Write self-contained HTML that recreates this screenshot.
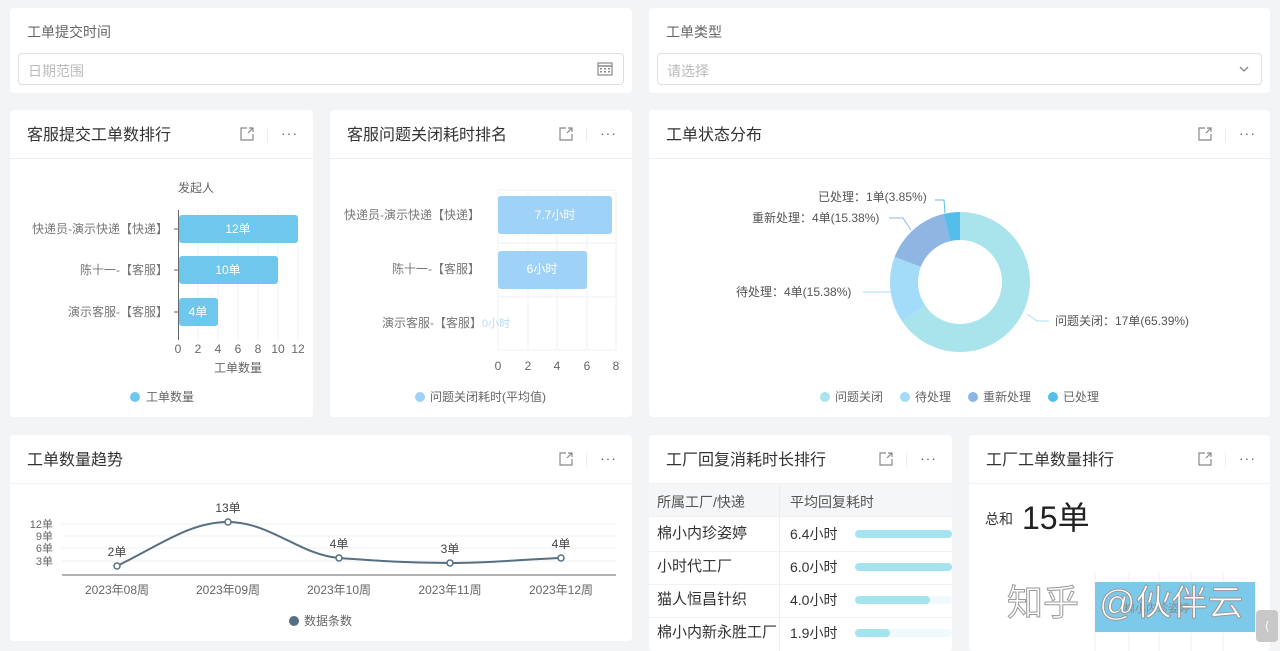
<!DOCTYPE html>
<html><head><meta charset="utf-8"><style>
*{box-sizing:border-box;margin:0;padding:0}
body{width:1280px;height:651px;overflow:hidden;background:#f3f4f6;font-family:"Liberation Sans","Noto Sans CJK SC",sans-serif;color:#333;position:relative}
.card{position:absolute;background:#fff;border-radius:4px;overflow:hidden}
.hd{height:49px;border-bottom:1px solid #f0f0f0;position:relative}
.hd .t{position:absolute;left:17px;top:11px;font-size:16px;color:#333}
.ic{position:absolute;top:16px;width:16px;height:16px}
.dots{position:absolute;top:16px;font-size:14px;line-height:14px;color:#666;letter-spacing:1px}
.sep{position:absolute;top:18px;width:1px;height:14px;background:#eee}
.inp{position:absolute;border:1px solid #dcdfe6;border-radius:4px;height:32px;font-size:14px;color:#bbb;padding:7px 9px}
svg text{font-family:"Liberation Sans","Noto Sans CJK SC",sans-serif}
</style></head><body>

<div class="card" style="left:10px;top:8px;width:622px;height:85px">
 <div style="position:absolute;left:17px;top:14px;font-size:14px;color:#666">工单提交时间</div>
 <div class="inp" style="left:8px;top:45px;width:606px">日期范围
  <svg style="position:absolute;right:10px;top:8px" width="16" height="14" viewBox="0 0 16 14"><rect x="1" y="1" width="14" height="12" fill="none" stroke="#888" stroke-width="1.2"/><line x1="1" y1="4" x2="15" y2="4" stroke="#888" stroke-width="1.5"/><g fill="#888"><rect x="3" y="6" width="2" height="1.5"/><rect x="7" y="6" width="2" height="1.5"/><rect x="11" y="6" width="2" height="1.5"/><rect x="3" y="9" width="2" height="1.5"/><rect x="7" y="9" width="2" height="1.5"/><rect x="11" y="9" width="2" height="1.5"/></g></svg>
 </div>
</div>
<div class="card" style="left:649px;top:8px;width:621px;height:85px">
 <div style="position:absolute;left:17px;top:14px;font-size:14px;color:#666">工单类型</div>
 <div class="inp" style="left:8px;top:45px;width:605px">请选择
  <svg style="position:absolute;right:12px;top:12px" width="10" height="7" viewBox="0 0 10 7"><path d="M1 1 L5 5 L9 1" fill="none" stroke="#888" stroke-width="1.3"/></svg>
 </div>
</div>

<div class="card" style="left:10px;top:110px;width:303px;height:307px">
 <div class="hd"><div class="t">客服提交工单数排行</div>
  <svg class="ic" style="left:229px" viewBox="0 0 16 16"><path d="M8 2H2v12h12V8M9 7l5-5M10 2h4v4" fill="none" stroke="#888" stroke-width="1.2"/></svg>
  <div class="sep" style="left:257px"></div><div class="dots" style="left:271px">···</div></div>
 <div style="position:absolute;left:168px;top:69px;font-size:12px;color:#666">发起人</div>
 <svg style="position:absolute;left:0;top:0" width="303" height="307">
  <g stroke="#f0f0f0"><line x1="188" y1="100" x2="188" y2="230"/><line x1="208" y1="100" x2="208" y2="230"/><line x1="228" y1="100" x2="228" y2="230"/><line x1="248" y1="100" x2="248" y2="230"/><line x1="268" y1="100" x2="268" y2="230"/><line x1="288" y1="100" x2="288" y2="230"/></g>
  <line x1="168.5" y1="100" x2="168.5" y2="230" stroke="#666"/>
  <g stroke="#666"><line x1="164" y1="119" x2="168" y2="119"/><line x1="164" y1="160" x2="168" y2="160"/><line x1="164" y1="202" x2="168" y2="202"/></g>
  <rect x="169" y="105" width="119" height="28" rx="3" fill="#6ec7ec"/>
  <rect x="169" y="146" width="99" height="28" rx="3" fill="#6ec7ec"/>
  <rect x="169" y="188" width="39" height="28" rx="3" fill="#6ec7ec"/>
  <g fill="#fff" font-size="12" text-anchor="middle"><text x="228" y="123">12单</text><text x="218" y="164">10单</text><text x="188" y="206">4单</text></g>
  <g fill="#777" font-size="12" text-anchor="end"><text x="158" y="123">快递员-演示快递【快递】</text><text x="158" y="164">陈十一-【客服】</text><text x="158" y="206">演示客服-【客服】</text></g>
  <g fill="#666" font-size="12" text-anchor="middle"><text x="168" y="243">0</text><text x="188" y="243">2</text><text x="208" y="243">4</text><text x="228" y="243">6</text><text x="248" y="243">8</text><text x="268" y="243">10</text><text x="288" y="243">12</text><text x="228" y="262">工单数量</text></g>
  <circle cx="125" cy="287" r="5" fill="#6ec7ec"/><text x="136" y="291" font-size="12" fill="#666">工单数量</text>
 </svg>
</div>

<div class="card" style="left:330px;top:110px;width:302px;height:307px">
 <div class="hd"><div class="t">客服问题关闭耗时排名</div>
  <svg class="ic" style="left:228px" viewBox="0 0 16 16"><path d="M8 2H2v12h12V8M9 7l5-5M10 2h4v4" fill="none" stroke="#888" stroke-width="1.2"/></svg>
  <div class="sep" style="left:256px"></div><div class="dots" style="left:270px">···</div></div>
 <svg style="position:absolute;left:0;top:0" width="302" height="307">
  <g stroke="#f0f0f0"><line x1="168" y1="80" x2="168" y2="240"/><line x1="198" y1="80" x2="198" y2="240"/><line x1="227" y1="80" x2="227" y2="240"/><line x1="257" y1="80" x2="257" y2="240"/><line x1="286" y1="80" x2="286" y2="240"/><line x1="168" y1="80" x2="286" y2="80"/><line x1="168" y1="133" x2="286" y2="133"/><line x1="168" y1="187" x2="286" y2="187"/><line x1="168" y1="240" x2="286" y2="240"/></g>
  <rect x="168" y="86" width="114" height="38" rx="3" fill="#9fd2f7"/>
  <rect x="168" y="141" width="89" height="38" rx="3" fill="#9fd2f7"/>
  <g fill="#fff" font-size="12" text-anchor="middle"><text x="225" y="109">7.7小时</text><text x="212" y="163">6小时</text></g>
  <text x="152" y="217" fill="#b5dcf7" font-size="11">0小时</text>
  <g fill="#777" font-size="12" text-anchor="end"><text x="150" y="109">快递员-演示快递【快递】</text><text x="150" y="163">陈十一-【客服】</text><text x="152" y="217">演示客服-【客服】</text></g>
  <g fill="#666" font-size="12" text-anchor="middle"><text x="168" y="260">0</text><text x="198" y="260">2</text><text x="227" y="260">4</text><text x="257" y="260">6</text><text x="286" y="260">8</text></g>
  <circle cx="90" cy="287" r="5" fill="#9fd2f7"/><text x="100" y="291" font-size="12" fill="#666">问题关闭耗时(平均值)</text>
 </svg>
</div>

<div class="card" style="left:649px;top:110px;width:621px;height:307px">
 <div class="hd"><div class="t">工单状态分布</div>
  <svg class="ic" style="left:548px" viewBox="0 0 16 16"><path d="M8 2H2v12h12V8M9 7l5-5M10 2h4v4" fill="none" stroke="#888" stroke-width="1.2"/></svg>
  <div class="sep" style="left:576px"></div><div class="dots" style="left:590px">···</div></div>
 <svg style="position:absolute;left:0;top:0" width="621" height="307">
  <g transform="translate(311,172) rotate(-90)" fill="none" stroke-width="28">
   <circle r="56" stroke="#a9e3ec" stroke-dasharray="230.08 351.86"/>
   <circle r="56" stroke="#a3dcf8" stroke-dasharray="54.12 351.86" stroke-dashoffset="-230.08"/>
   <circle r="56" stroke="#8fb6e3" stroke-dasharray="54.12 351.86" stroke-dashoffset="-284.2"/>
   <circle r="56" stroke="#55bdea" stroke-dasharray="13.54 351.86" stroke-dashoffset="-338.32"/>
  </g>
  <g fill="none" stroke-width="1"><path d="M286 90 L295 90 L296 103" stroke="#55bdea"/><path d="M240 108 L254 108 L262 120" stroke="#8fb6e3"/><path d="M214 182 L240 182 L250 180" stroke="#a3dcf8"/><path d="M400 211 L388 211 L378 204" stroke="#a9e3ec"/></g>
  <g fill="#555" font-size="12"><text x="169" y="91">已处理：1单(3.85%)</text><text x="103" y="112">重新处理：4单(15.38%)</text><text x="87" y="186">待处理：4单(15.38%)</text><text x="406" y="215">问题关闭：17单(65.39%)</text></g>
  <g font-size="12" fill="#666"><circle cx="176" cy="287" r="5" fill="#a9e3ec"/><text x="186" y="291">问题关闭</text><circle cx="256" cy="287" r="5" fill="#a3dcf8"/><text x="266" y="291">待处理</text><circle cx="324" cy="287" r="5" fill="#8fb6e3"/><text x="334" y="291">重新处理</text><circle cx="404" cy="287" r="5" fill="#55bdea"/><text x="414" y="291">已处理</text></g>
 </svg>
</div>

<div class="card" style="left:10px;top:435px;width:622px;height:206px">
 <div class="hd"><div class="t">工单数量趋势</div>
  <svg class="ic" style="left:548px" viewBox="0 0 16 16"><path d="M8 2H2v12h12V8M9 7l5-5M10 2h4v4" fill="none" stroke="#888" stroke-width="1.2"/></svg>
  <div class="sep" style="left:576px"></div><div class="dots" style="left:590px">···</div></div>
 <svg style="position:absolute;left:0;top:0" width="622" height="206">
  <g stroke="#f0f0f0"><line x1="52" y1="89" x2="606" y2="89"/><line x1="52" y1="101" x2="606" y2="101"/><line x1="52" y1="113" x2="606" y2="113"/><line x1="52" y1="126" x2="606" y2="126"/></g>
  <line x1="52" y1="140" x2="606" y2="140" stroke="#666"/>
  <g fill="#666" font-size="11" text-anchor="end"><text x="43" y="93">12单</text><text x="43" y="105">9单</text><text x="43" y="117">6单</text><text x="43" y="130">3单</text></g>
  <path d="M107 131 C150 110,180 87,218 87 C260 87,290 120,329 123 C370 126,400 128,440 128 C480 128,520 124,551 123" fill="none" stroke="#566f82" stroke-width="2"/>
  <g fill="#fff" stroke="#566f82" stroke-width="1.5"><circle cx="107" cy="131" r="3"/><circle cx="218" cy="87" r="3"/><circle cx="329" cy="123" r="3"/><circle cx="440" cy="128" r="3"/><circle cx="551" cy="123" r="3"/></g>
  <g fill="#444" font-size="12" text-anchor="middle"><text x="107" y="121">2单</text><text x="218" y="77">13单</text><text x="329" y="113">4单</text><text x="440" y="118">3单</text><text x="551" y="113">4单</text></g>
  <g fill="#666" font-size="12" text-anchor="middle"><text x="107" y="159">2023年08周</text><text x="218" y="159">2023年09周</text><text x="329" y="159">2023年10周</text><text x="440" y="159">2023年11周</text><text x="551" y="159">2023年12周</text></g>
  <circle cx="284" cy="186" r="5" fill="#566f82"/><text x="294" y="190" font-size="12" fill="#666">数据条数</text>
 </svg>
</div>

<div class="card" style="left:649px;top:435px;width:303px;height:216px">
 <div class="hd"><div class="t">工厂回复消耗时长排行</div>
  <svg class="ic" style="left:229px" viewBox="0 0 16 16"><path d="M8 2H2v12h12V8M9 7l5-5M10 2h4v4" fill="none" stroke="#888" stroke-width="1.2"/></svg>
  <div class="sep" style="left:257px"></div><div class="dots" style="left:271px">···</div></div>
 <div style="position:absolute;left:0;top:49px;width:303px;height:33px;background:#f5f6f7;border-bottom:1px solid #eee"></div>
 <div style="position:absolute;left:130px;top:49px;width:1px;height:170px;background:#eee"></div>
 <div style="position:absolute;left:8px;top:57px;font-size:14px;color:#555">所属工厂/快递</div>
 <div style="position:absolute;left:141px;top:57px;font-size:14px;color:#555">平均回复耗时</div>
 <div style="position:absolute;left:0;top:116px;width:303px;height:1px;background:#f2f2f2"></div>
 <div style="position:absolute;left:0;top:149px;width:303px;height:1px;background:#f2f2f2"></div>
 <div style="position:absolute;left:0;top:182px;width:303px;height:1px;background:#f2f2f2"></div>
 <div style="position:absolute;left:8px;top:89px;font-size:15px;color:#333;line-height:20px">棉小内珍姿婷<br><span style="display:block;margin-top:13px">小时代工厂</span><span style="display:block;margin-top:13px">猫人恒昌针织</span><span style="display:block;margin-top:13px">棉小内新永胜工厂</span></div>
 <div style="position:absolute;left:141px;top:89px;font-size:14px;color:#333;line-height:20px">6.4小时<br><span style="display:block;margin-top:13px">6.0小时</span><span style="display:block;margin-top:13px">4.0小时</span><span style="display:block;margin-top:13px">1.9小时</span></div>
 <div style="position:absolute;left:206px;top:95px;width:97px;height:8px;border-radius:4px;background:#a5e4ee"></div>
 <div style="position:absolute;left:206px;top:128px;width:97px;height:8px;border-radius:4px;background:#a5e4ee"></div>
 <div style="position:absolute;left:206px;top:161px;width:97px;height:8px;border-radius:4px;background:#f0f9fb"></div>
 <div style="position:absolute;left:206px;top:161px;width:75px;height:8px;border-radius:4px;background:#a5e4ee"></div>
 <div style="position:absolute;left:206px;top:194px;width:97px;height:8px;border-radius:4px;background:#f0f9fb"></div>
 <div style="position:absolute;left:206px;top:194px;width:35px;height:8px;border-radius:4px;background:#a5e4ee"></div>
</div>

<div class="card" style="left:969px;top:435px;width:301px;height:216px">
 <div class="hd"><div class="t">工厂工单数量排行</div>
  <svg class="ic" style="left:228px" viewBox="0 0 16 16"><path d="M8 2H2v12h12V8M9 7l5-5M10 2h4v4" fill="none" stroke="#888" stroke-width="1.2"/></svg>
  <div class="sep" style="left:256px"></div><div class="dots" style="left:270px">···</div></div>
 <div style="position:absolute;left:16px;top:74px;font-size:14px;color:#333">总和</div>
 <div style="position:absolute;left:53px;top:58px;font-size:32px;color:#222">15单</div>
 <svg style="position:absolute;left:0;top:0" width="301" height="216">
  <g stroke="#f0f0f0"><line x1="126" y1="138" x2="126" y2="216"/><line x1="160" y1="138" x2="160" y2="216"/><line x1="190" y1="138" x2="190" y2="216"/><line x1="222" y1="138" x2="222" y2="216"/><line x1="254" y1="138" x2="254" y2="216"/></g>
  <rect x="126" y="147" width="160" height="50" fill="#7cc9ea"/>
  <text x="155" y="177" font-size="11" fill="#888">棉小内珍姿婷</text>
  <g font-size="36" fill="#fff" stroke="#999" stroke-width="1"><text x="38" y="180">知乎</text><text x="130" y="180">@伙伴云</text></g>
 </svg>
</div>
<div style="position:absolute;left:1256px;top:610px;width:22px;height:32px;background:#c8c8c8;border-radius:4px;color:#fff;font-size:12px;text-align:center;line-height:32px">⟨</div>
</body></html>
